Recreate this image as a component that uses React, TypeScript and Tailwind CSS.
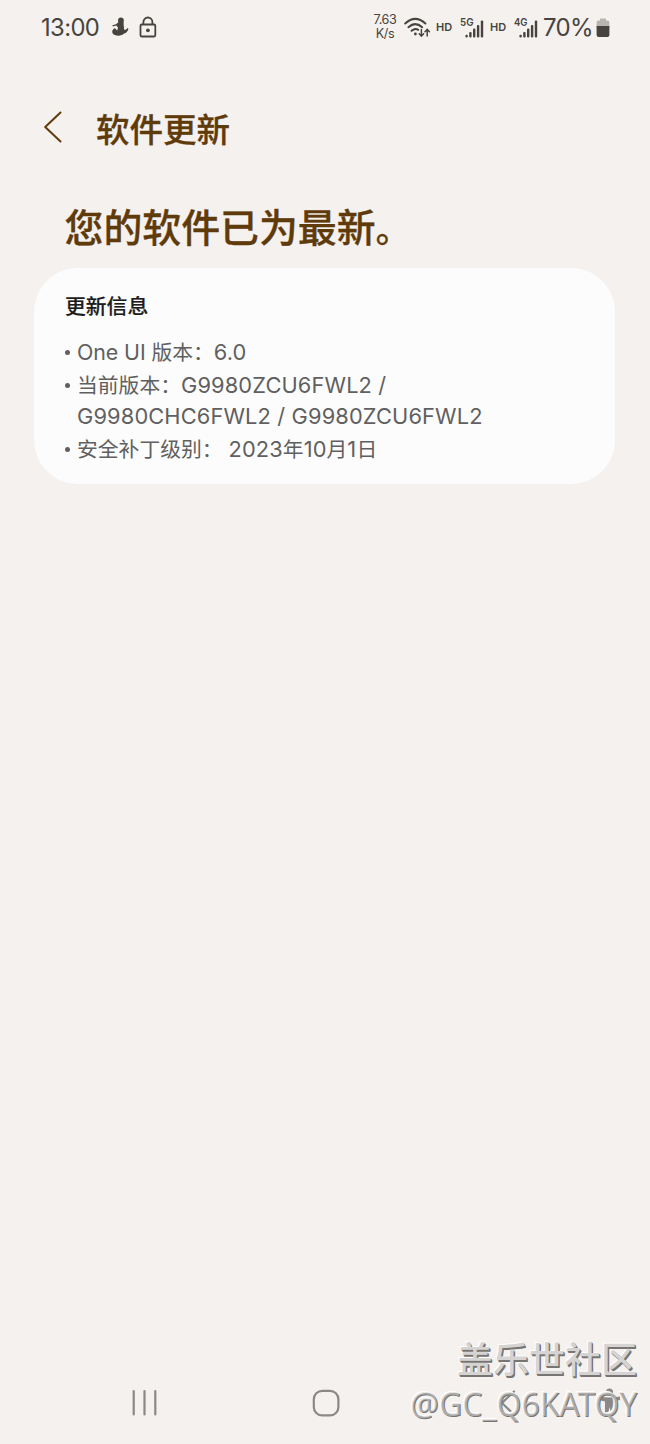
import React from "react";

function StatusBar() {
  return (
    <header className="flex h-[54px] w-full items-center pl-[41px] text-[#474440]">
      <span className="mt-[2px] w-[59px] whitespace-nowrap text-[23.8px] tracking-[-0.6px]">13:00</span>
      <svg className="ml-[11px] h-[20px] w-[18px]" viewBox="0 0 18 20" fill="currentColor">
        <circle cx="9.9" cy="3.4" r="2.9" />
        <path d="M7.6 5 L12.6 5 C12.3 8 13.4 10 12.9 12.2 C14.3 13.2 15.2 12.8 16.4 11 L17.5 11.7 C16.8 15 14.5 16.3 13 16.5 C11 19.3 3.5 19.4 1.8 16.5 C.6 14.5 1.6 12 4 11.3 L6.2 13.5 L7 10.8 L5.4 8.6 L1.8 9.4 L1.4 8.2 L5 7.2 Z" />
      </svg>
      <svg className="ml-[10px] h-[23px] w-[18px]" viewBox="0 0 18 23" fill="none" stroke="currentColor" strokeWidth="1.8">
        <rect x="1.5" y="8.5" width="14.8" height="12" rx="1.2" />
        <path d="M4.4 8.5 V6 a4.5 4.5 0 0 1 9 0 V8.5" />
        <circle cx="8.9" cy="14.3" r="1.9" fill="currentColor" stroke="none" />
      </svg>
      <div className="ml-[215px] flex w-[26px] flex-col items-center whitespace-nowrap text-[12.6px] leading-[14px] tracking-[-0.4px]">
        <span>7.63</span>
        <span>K/s</span>
      </div>
      <svg className="mt-[2px] ml-[5px] h-[22px] w-[28px]" viewBox="0 0 28 22" fill="none" stroke="currentColor" strokeWidth="2" strokeLinecap="round">
        <path d="M2.2 6.5 Q12.3 -2.8 22.4 6.5" />
        <path d="M5.4 10.2 Q12.3 4 19.2 10.2" />
        <path d="M8.6 13.8 Q12.2 10.8 15.2 12.8" />
        <circle cx="12.4" cy="17" r="1.4" fill="currentColor" stroke="none" />
        <path d="M18.4 12.5 V18.8 M16.2 16.8 L18.4 19.2 L20.6 16.8 M24.2 19 V12.8 M22 14.8 L24.2 12.4 L26.4 14.8" strokeWidth="1.5" />
      </svg>
      <span className="mt-px ml-[5px] w-[17px] text-[11px] font-semibold">HD</span>
      <Signal label="5G" className="mt-[2px] ml-[7px] h-[22px] w-[24px]" />
      <span className="mt-px ml-[6px] w-[17px] text-[11px] font-semibold">HD</span>
      <Signal label="4G" className="mt-[2px] ml-[7px] h-[22px] w-[24px]" />
      <span className="mt-[2px] ml-[5px] w-[49px] whitespace-nowrap text-[24px] tracking-[-0.7px]">70%</span>
      <svg className="mt-px ml-[4px] h-[20px] w-[14px]" viewBox="0 0 14 20">
        <path d="M4 .6 h6 v1.8 h1.4 a2 2 0 0 1 2 2 V10 H.6 V4.4 a2 2 0 0 1 2 -2 H4Z" fill="#b8b5b1" />
        <path d="M.6 8 H13.4 V17 a2 2 0 0 1 -2 2 H2.6 a2 2 0 0 1 -2 -2Z" fill="#474440" />
      </svg>
    </header>
  );
}

function Signal({ label, className }: { label: string; className: string }) {
  return (
    <svg className={className} viewBox="0 0 24 22" fill="currentColor">
      <text x="0" y="8.6" fontSize="10.5" fontWeight="600" fontFamily="Inter, sans-serif" textLength="13.5" lengthAdjust="spacingAndGlyphs">{label}</text>
      <rect x="5.4" y="17.8" width="2.4" height="2.6" rx="1" />
      <rect x="9.2" y="15" width="2.4" height="5.4" rx="1" />
      <rect x="13" y="11.5" width="2.4" height="8.9" rx="1" />
      <rect x="16.9" y="8" width="2.4" height="12.4" rx="1" />
      <rect x="20.8" y="3.5" width="2.4" height="16.9" rx="1" />
    </svg>
  );
}

function InfoRow({ children }: { children: React.ReactNode }) {
  return (
    <li className="flex whitespace-nowrap">
      <span className="mt-[12.5px] mr-[7px] size-[5px] shrink-0 rounded-full bg-[#606060]" />
      <div>{children}</div>
    </li>
  );
}

function Latin({ children }: { children: React.ReactNode }) {
  return <span className="text-[21.8px] leading-[20px] tracking-[0.15px]">{children}</span>;
}

export default function App() {
  return (
    <div className="relative flex h-[1444px] w-[650px] flex-col overflow-hidden bg-[#f5f1ee] font-['Inter','Noto_Sans_CJK_SC',sans-serif]">
      <StatusBar />
      <div className="mt-[48px] flex h-[52px] items-center pl-[43px] text-[#5f3b0c]">
        <svg className="mb-[2px] h-[34px] w-[20px]" viewBox="0 0 20 34" fill="none" stroke="currentColor" strokeWidth="2" strokeLinecap="round" strokeLinejoin="round">
          <path d="M17.5 2.5 L2.2 17 L17.5 31.5" />
        </svg>
        <h1 className="mt-[3px] ml-[33px] text-[33.5px] leading-[52px] font-medium [-webkit-text-stroke:0.3px_#5f3b0c]">软件更新</h1>
      </div>
      <h2 className="mt-[44px] h-[60px] pl-[64.5px] text-[38.9px] leading-[60px] font-medium text-[#5f3b0c] [-webkit-text-stroke:0.3px_#5f3b0c]">您的软件已为最新<span className="text-[34px]">。</span></h2>
      <section className="mr-[35px] ml-[34px] mt-[10px] h-[216px] rounded-[44px] bg-[#fcfcfc] pt-[23px] pl-[31px]">
        <h3 className="text-[20.8px] leading-[32px] font-medium text-[#1c1c1c] [-webkit-text-stroke:0.2px_#1c1c1c]">更新信息</h3>
        <ul className="mt-[14px] flex flex-col gap-[2px] text-[20.8px] leading-[31px] text-[#606060]">
          <InfoRow><span className="text-[21.4px] leading-[20px] tracking-[-0.1px]">One UI</span> 版本：<Latin>6.0</Latin></InfoRow>
          <InfoRow>
            <p>当前版本：<Latin>G9980ZCU6FWL2 /</Latin></p>
            <p><Latin>G9980CHC6FWL2 / G9980ZCU6FWL2</Latin></p>
          </InfoRow>
          <InfoRow>安全补丁级别： <Latin>2023</Latin>年<Latin>10</Latin>月<Latin>1</Latin>日</InfoRow>
        </ul>
      </section>
      <nav className="mt-auto flex h-[82px] items-center pl-[132px] text-[#8b8885]">
        <svg className="h-[28px] w-[26px]" viewBox="0 0 26 28" stroke="currentColor" strokeWidth="2.2" strokeLinecap="round">
          <path d="M1.7 2 V25.5 M12.5 2 V25.5 M23.3 2 V25.5" />
        </svg>
        <svg className="ml-[154px] h-[28px] w-[28px]" viewBox="0 0 28 28" fill="none" stroke="currentColor" strokeWidth="2.2">
          <rect x="1.8" y="1.8" width="24.6" height="24.6" rx="8.5" />
        </svg>
        <svg className="ml-[159px] h-[28px] w-[18px]" viewBox="0 0 18 28" fill="none" stroke="currentColor" strokeWidth="2.2" strokeLinecap="round">
          <path d="M15 2.5 L3 14 L15 25.5" />
        </svg>
        <svg className="ml-[81px] h-[30px] w-[24px]" viewBox="0 0 24 30" fill="currentColor">
          <circle cx="11.5" cy="4" r="3.5" />
          <path d="M1 8.5 Q11 10.5 22 8.5 V12 L16 13.5 V26 H13 L11.5 19 L10 26 H7 V13.5 L1 12Z" />
        </svg>
      </nav>
      <div className="absolute right-[13px] bottom-[17px] flex flex-col items-end whitespace-nowrap">
        <span className="font-['Noto_Sans_CJK_SC',sans-serif] text-[36px] leading-[48px] font-medium text-[#d6d4d2] [text-shadow:1px_1px_0_#777573,1.5px_1.5px_0_#777573,-1px_-1px_0_#ffffff]">盖乐世社区</span>
        <span className="font-['Noto_Sans',sans-serif] text-[31.9px] leading-[46px] text-[#d3d1cf99] [text-shadow:1px_1px_0_#777573,-1px_-1px_0_#ffffff]">@GC_Q6KATQY</span>
      </div>
    </div>
  );
}
